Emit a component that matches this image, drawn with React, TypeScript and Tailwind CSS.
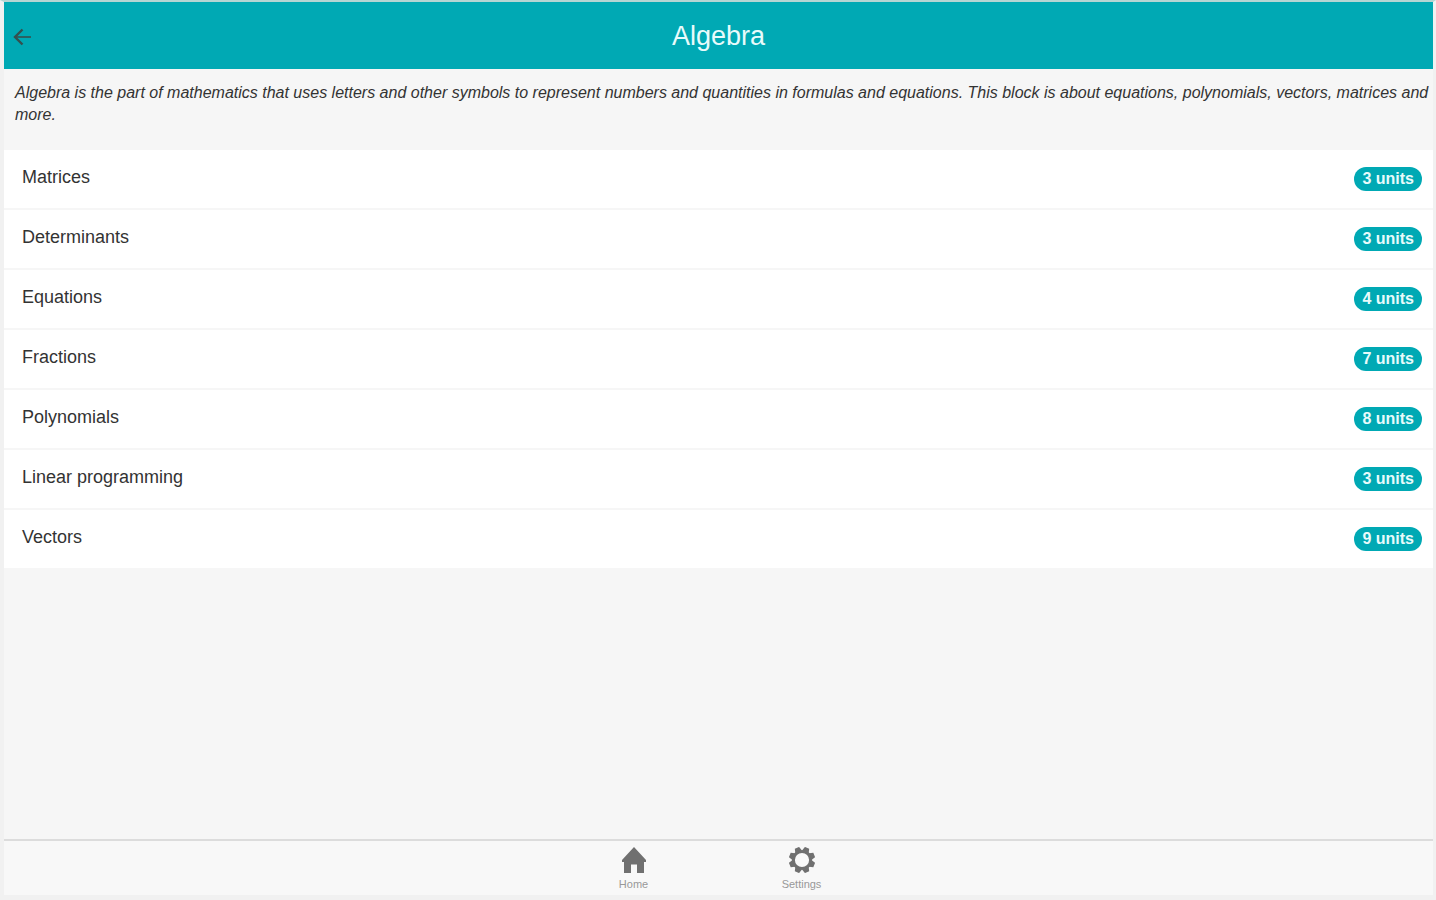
interface Topic {
  name: string;
  units: number;
}

const topics: Topic[] = [
  { name: "Matrices", units: 3 },
  { name: "Determinants", units: 3 },
  { name: "Equations", units: 4 },
  { name: "Fractions", units: 7 },
  { name: "Polynomials", units: 8 },
  { name: "Linear programming", units: 3 },
  { name: "Vectors", units: 9 },
];

const toothAngles = [22.5, 67.5, 112.5, 157.5, 202.5, 247.5, 292.5, 337.5];

function BackIcon() {
  return (
    <svg viewBox="0 0 18 18" className="h-[18px] w-[18px]" fill="none" stroke="#35504f" aria-hidden="true">
      <path d="M9.500 1.500 2 9l7.500 7.500" strokeWidth="2.4" />
      <path d="M2 9h16" strokeWidth="2" strokeOpacity="0.8" />
    </svg>
  );
}

function HomeIcon() {
  return (
    <svg viewBox="0 0 24 26" className="h-[26px] w-6 shrink-0" fill="currentColor" aria-hidden="true">
      <path d="M12 0 0 13v2h2v11h7v-8.500h6V26h7V15h2v-2z" />
    </svg>
  );
}

function SettingsIcon() {
  return (
    <svg viewBox="-13 -13 26 26" className="h-[26px] w-[26px] shrink-0" aria-hidden="true">
      <circle r="8.6" fill="none" stroke="currentColor" strokeWidth="3" />
      {toothAngles.map((angle) => (
        <path key={angle} d="M-3.600-8.800-2.300-13.200H2.300L3.600-8.800z" fill="currentColor" transform={`rotate(${angle})`} />
      ))}
    </svg>
  );
}

function TopicRow({ name, units }: Topic) {
  return (
    <li>
      <a href="#" className="flex h-[58px] items-center justify-between bg-white pr-[11px] pl-[18px]">
        <span className="pb-1 text-[18px] leading-6 text-[#333]">{name}</span>
        <span className="flex h-6 items-center rounded-full bg-[#00a9b4] px-2 text-[16px] font-bold text-[#e8fbfb]">{units} units</span>
      </a>
    </li>
  );
}

export default function App() {
  return (
    <div className="flex min-h-screen flex-col border-t-2 border-r-3 border-b-5 border-l-4 border-t-[#b5d5d3] border-r-[#f1f1f1] border-b-[#f1f1f1] border-l-[#f1f1f1] bg-[#f6f6f6] font-['Liberation_Sans',Arial,sans-serif]">
      <header className="grid h-[67px] grid-cols-[1fr_auto_1fr] items-center bg-[#00a9b4] px-[9px]">
        <button type="button" aria-label="Back" className="justify-self-start pt-0.5">
          <BackIcon />
        </button>
        <h1 className="text-[27px] leading-8 text-[#e8fbfb]">Algebra</h1>
      </header>

      <main className="grow">
        <p className="pt-[13px] pr-0.5 pb-6 pl-[11px] text-[16px] leading-[22px] text-[#333] italic">
          Algebra is the part of mathematics that uses letters and other symbols to represent numbers and quantities in formulas and equations. This block is about equations, polynomials, vectors, matrices and more.
        </p>
        <ul className="flex flex-col gap-0.5">
          {topics.map((topic) => (
            <TopicRow key={topic.name} {...topic} />
          ))}
        </ul>
      </main>

      <nav className="flex h-14 justify-center border-t-2 border-[#dcdcdc] bg-[#f8f8f8] pr-0.5 text-[#707070]">
        <a href="#" className="flex w-[168px] flex-col items-center pt-1.5">
          <HomeIcon />
          <span className="text-[11px] leading-[22px] text-[#999]">Home</span>
        </a>
        <a href="#" className="flex w-[168px] flex-col items-center pt-1.5">
          <SettingsIcon />
          <span className="text-[11px] leading-[22px] text-[#999]">Settings</span>
        </a>
      </nav>
    </div>
  );
}
